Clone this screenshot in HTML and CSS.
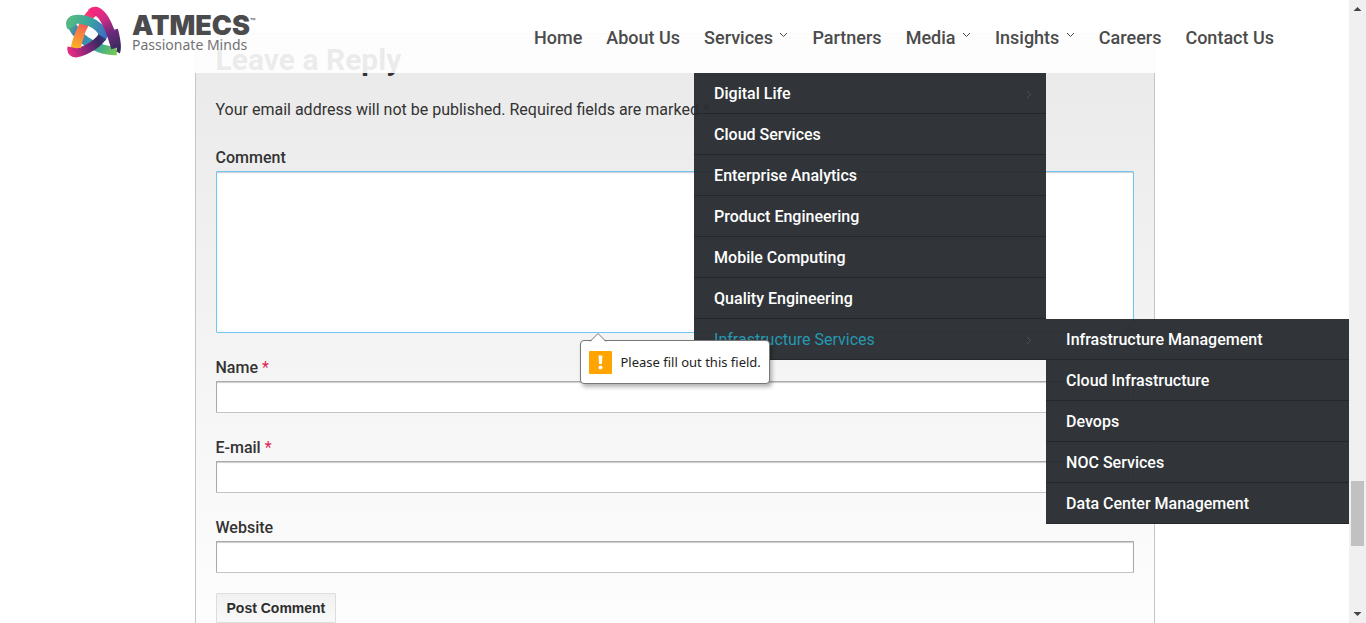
FILE: index.html
```html
<!DOCTYPE html>
<html lang="en">
<head>
<meta charset="utf-8">
<title>ATMECS - Leave a Reply</title>
<link rel="stylesheet" href="styles.css">
</head>
<body>
<div class="window">
  <div class="page">
    <header class="header">
      <a class="logo" href="#">
        <svg class="logo-mark" viewBox="0 0 168 156" fill="none" stroke-width="27" aria-hidden="true">
          <defs>
            <linearGradient id="warm" gradientUnits="userSpaceOnUse" x1="26" y1="130" x2="80" y2="16"><stop offset="0" stop-color="#fdb522"/><stop offset=".45" stop-color="#f47b45"/><stop offset="1" stop-color="#f5277f"/></linearGradient>
            <linearGradient id="plum" gradientUnits="userSpaceOnUse" x1="84" y1="14" x2="156" y2="130"><stop offset="0" stop-color="#f5277f"/><stop offset=".25" stop-color="#d22b85"/><stop offset=".6" stop-color="#6e2a7b"/><stop offset="1" stop-color="#352b5c"/></linearGradient>
            <linearGradient id="leaf" gradientUnits="userSpaceOnUse" x1="12" y1="52" x2="155" y2="140"><stop offset="0" stop-color="#50b184"/><stop offset=".2" stop-color="#3a79c0"/><stop offset=".6" stop-color="#36a2a0"/><stop offset="1" stop-color="#79cc49"/></linearGradient>
            <linearGradient id="sea" gradientUnits="userSpaceOnUse" x1="12" y1="46" x2="118" y2="84"><stop offset="0" stop-color="#54b883"/><stop offset=".5" stop-color="#39a59f"/><stop offset="1" stop-color="#3f6fc5"/></linearGradient>
            <linearGradient id="wine" gradientUnits="userSpaceOnUse" x1="116" y1="96" x2="20" y2="145"><stop offset="0" stop-color="#343b7c"/><stop offset=".2" stop-color="#3b2860"/><stop offset=".55" stop-color="#7d257a"/><stop offset="1" stop-color="#e02a83"/></linearGradient>
          </defs>
          <path stroke="url(#leaf)" d="M152 134C112 136 44 112 17 58"/>
          <path stroke="url(#warm)" d="M26 134C32 98 60 30 86 16"/>
          <path stroke="url(#sea)" d="M17 64C-2 28 66 36 98 64Q118 82 106 98"/>
          <path stroke="url(#plum)" d="M75 21C104 -2 130 60 149 126"/>
          <path stroke="url(#plum)" stroke-width="12" d="M150 70Q164 126 156 139"/>
          <path stroke="url(#wine)" d="M109 92C90 120 32 150 21 138Q16 134 18 124"/>
          <path stroke="url(#warm)" d="M31 124Q35 104 44 80"/>
        </svg>
        <span class="logo-text">
          <span class="logo-name">ATMECS<sup class="logo-tm">™</sup></span>
          <span class="logo-tag">Passionate Minds</span>
        </span>
      </a>
      <nav class="nav">
        <ul class="nav-list">
          <li class="nav-item"><a href="#">Home</a></li>
          <li class="nav-item"><a href="#">About Us</a></li>
          <li class="nav-item">
            <a href="#">Services <svg class="caret" viewBox="0 0 9 6"><path d="M1 1l3.500 3.500L8 1"/></svg></a>
            <ul class="menu">
              <li><a href="#">Digital Life <svg class="more" viewBox="0 0 6 9"><path d="M1 1l3.500 3.500L1 8"/></svg></a></li>
              <li><a href="#">Cloud Services</a></li>
              <li><a href="#">Enterprise Analytics</a></li>
              <li><a href="#">Product Engineering</a></li>
              <li><a href="#">Mobile Computing</a></li>
              <li><a href="#">Quality Engineering</a></li>
              <li><a class="current" href="#">Infrastructure Services <svg class="more" viewBox="0 0 6 9"><path d="M1 1l3.500 3.500L1 8"/></svg></a>
                <ul class="menu submenu">
                  <li><a href="#">Infrastructure Management</a></li>
                  <li><a href="#">Cloud Infrastructure</a></li>
                  <li><a href="#">Devops</a></li>
                  <li><a href="#">NOC Services</a></li>
                  <li><a href="#">Data Center Management</a></li>
                </ul>
              </li>
            </ul>
          </li>
          <li class="nav-item"><a href="#">Partners</a></li>
          <li class="nav-item"><a href="#">Media <svg class="caret" viewBox="0 0 9 6"><path d="M1 1l3.500 3.500L8 1"/></svg></a></li>
          <li class="nav-item"><a href="#">Insights <svg class="caret" viewBox="0 0 9 6"><path d="M1 1l3.500 3.500L8 1"/></svg></a></li>
          <li class="nav-item"><a href="#">Careers</a></li>
          <li class="nav-item"><a href="#">Contact Us</a></li>
        </ul>
      </nav>
    </header>
    <main class="reply">
      <h1 class="reply-title">Leave a Reply</h1>
      <p class="note">Your email address will not be published. Required fields are marked <span class="required">*</span></p>
      <form class="form">
        <div class="field">
          <label for="comment">Comment</label>
          <textarea id="comment" class="focused"></textarea>
          <div class="bubble" role="alert">
            <svg class="bubble-tip" viewBox="0 0 18 9"><path class="tip-fill" d="M1 9L9 1l8 8z"/><path class="tip-line" d="M1 8.500L9 .5l8 8"/></svg>
            <svg class="warning" viewBox="0 0 23 23"><rect width="23" height="23" rx="1" fill="#ffa400"/><path d="M9.500 4.500h4l-.6 8.500h-2.800z" fill="#fff"/><circle cx="11.500" cy="16.500" r="2" fill="#fff"/></svg>
            <span>Please fill out this field.</span>
          </div>
        </div>
        <div class="field"><label for="name">Name <span class="required">*</span></label><input id="name" type="text"></div>
        <div class="field"><label for="email">E-mail <span class="required">*</span></label><input id="email" type="email"></div>
        <div class="field"><label for="website">Website</label><input id="website" type="url"></div>
        <button class="submit" type="button">Post Comment</button>
      </form>
    </main>
  </div>
  <div class="scrollbar" aria-hidden="true">
    <svg viewBox="0 0 17 17"><path d="M4.500 11h8l-4-4z"/></svg>
    <div class="thumb"></div>
    <svg viewBox="0 0 17 17"><path d="M4.500 6h8l-4 4z"/></svg>
  </div>
</div>
</body>
</html>
```

FILE: styles.css
```css
* { box-sizing: border-box; }
body { margin: 0; background: #fff; color: #333; font: 16px/26px Roboto, "Liberation Sans", sans-serif; }
ul { list-style: none; margin: 0; padding: 0; }
a { color: inherit; text-decoration: none; }

.window { display: flex; height: 100vh; overflow: hidden; }
.page { position: relative; flex: 1; min-width: 0; overflow: hidden; padding-top: 33px; }

.header {
  position: absolute; top: 0; left: 0; right: 0; z-index: 10;
  display: flex; justify-content: space-between; align-items: stretch;
  padding: 0 65px 0 66px; background: rgba(255, 255, 255, .9);
}
.logo { display: flex; gap: 10px; padding: 6px 0 15px; color: #4b4b4d; }
.logo-mark { width: 56px; height: 52px; }
.logo-text { display: flex; flex-direction: column; padding-top: 8px; }
.logo-name { font: 900 27px/24px Inter, sans-serif; white-space: nowrap; }
.logo-tm { font-size: 9px; font-weight: 400; line-height: 9px; vertical-align: 10px; }
.logo-tag { font: 14px/14px "Noto Sans", sans-serif; color: #727274; white-space: nowrap; }

.nav-list { display: flex; gap: 4px; }
.nav-item { position: relative; font-size: 18px; font-weight: 500; line-height: 70px; color: #4b4b4b; white-space: nowrap; }
.nav-item > a { display: block; padding: 3px 10px 0; }
.caret { width: 9px; height: 6px; margin-left: 2px; vertical-align: 6px; }
.caret path, .more path { fill: none; stroke: currentColor; stroke-width: 1; }

.menu { position: absolute; top: 100%; left: 0; width: 352px; background: rgba(41, 45, 49, .96); font-size: 16px; line-height: 38px; color: #fff; }
.menu li { position: relative; border-bottom: 1px solid #25272a; }
.menu a { display: flex; justify-content: space-between; align-items: center; padding: 2px 14px 0 20px; }
.menu .current { color: #2698b2; font-weight: 400; }
.more { width: 6px; height: 9px; color: #4b4e52; }
.submenu { top: 0; left: 100%; }

.reply {
  max-width: 960px; margin: 0 auto; padding: 8px 20px 20px;
  border: 1px solid #c5c5c5;
  background: linear-gradient(#e9e9e9, #fefefe);
}
.reply-title { margin: 0 0 17px; font-size: 30px; font-weight: 700; line-height: 36px; }
.note { margin: 0 0 20px; padding-top: 2px; }
.required { color: #dc2450; font-weight: 400; }
.form { display: flex; flex-direction: column; align-items: flex-start; gap: 20px; }
.field { position: relative; width: 100%; }
.field label { display: block; padding-top: 2px; font-weight: 500; }
.field input, .field textarea {
  display: block; width: 100%; height: 32px; padding: 4px 8px;
  border: 1px solid #aaa; border-bottom-color: #c4c4c4; border-radius: 1px; background: #fff;
  box-shadow: inset 0 1px 1px #ccc; font: inherit; outline: 0;
}
.field textarea { height: 162px; }
.field .focused { border-color: #6dc7f2; }
.submit { height: 30px; padding: 0 10px; border: 1px solid #ddd; border-radius: 1px; background: linear-gradient(#f1f1f1, #f9f9f9); color: #2d2d2d; font: 700 14px/28px "Liberation Sans", sans-serif; }

.bubble {
  position: absolute; top: 100%; left: 364px; z-index: 20; margin-top: 7px;
  display: flex; align-items: center; gap: 9px; height: 44px; padding: 0 8px;
  border: 1px solid #777; border-radius: 4px; background: #fff; box-shadow: 2px 3px 4px rgba(0, 0, 0, .3);
  color: #222; font: 13px/20px "Noto Sans", sans-serif; white-space: nowrap;
}
.bubble-tip { position: absolute; left: 8px; bottom: 100%; width: 18px; height: 9px; margin-bottom: -1px; }
.tip-fill { fill: #fff; }
.tip-line { fill: none; stroke: #777; }
.warning { width: 23px; height: 23px; }

.scrollbar { position: relative; display: flex; flex-direction: column; justify-content: space-between; width: 17px; background: #f0f0f0; }
.scrollbar svg { width: 17px; height: 17px; fill: #444; }
.thumb { position: absolute; top: 77.2%; left: 2px; right: 2px; height: 65px; background: #c1c1c1; }
```
